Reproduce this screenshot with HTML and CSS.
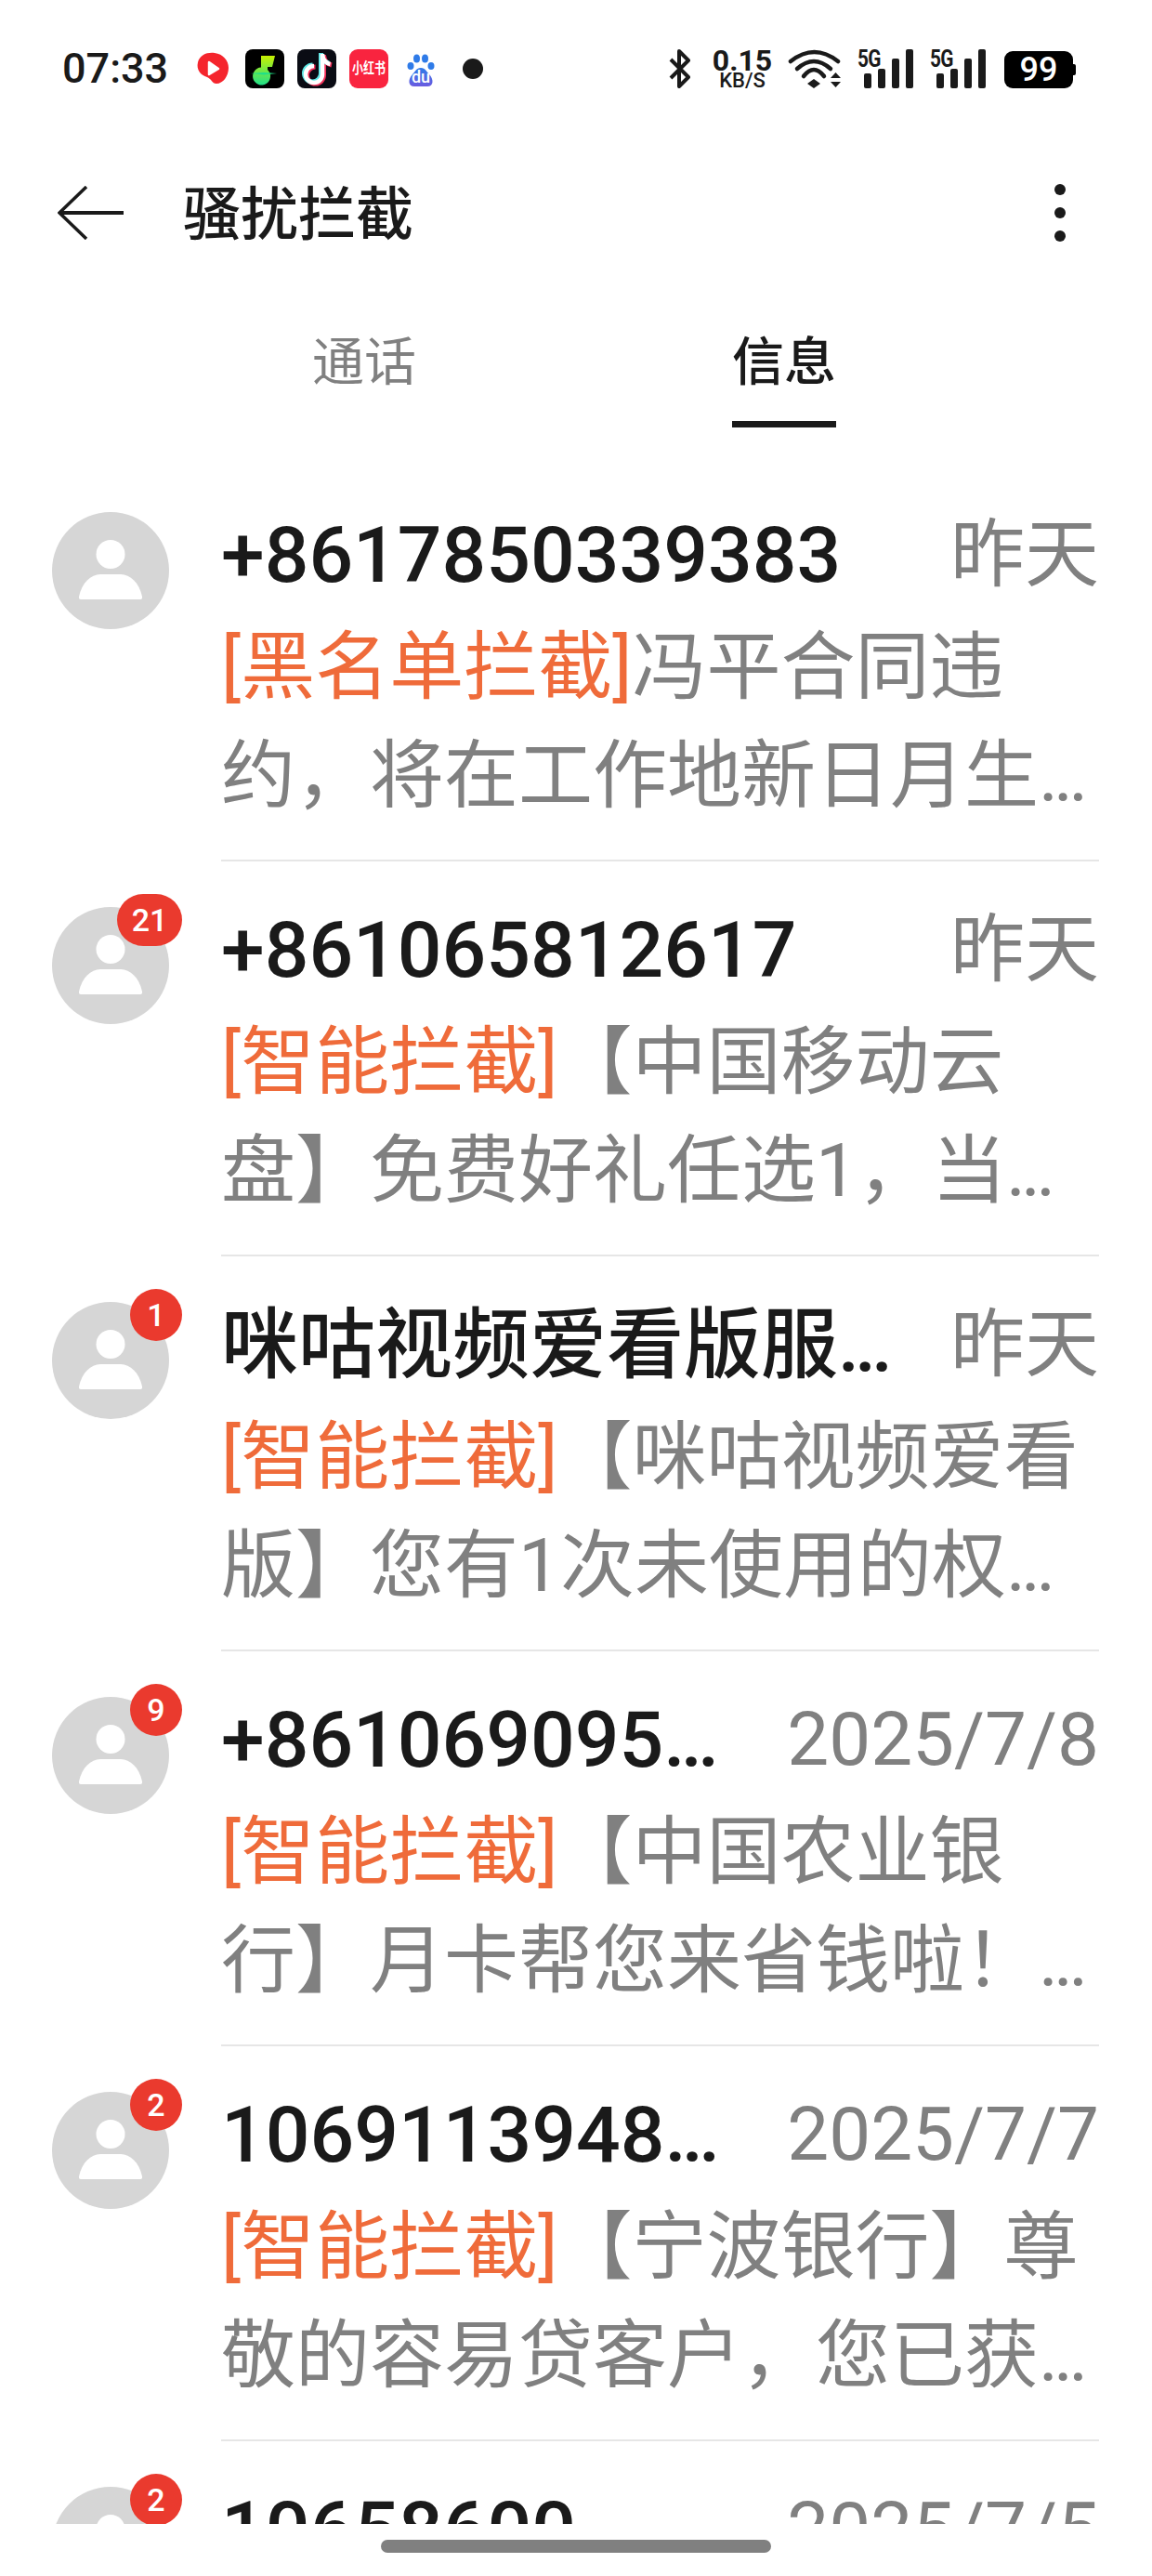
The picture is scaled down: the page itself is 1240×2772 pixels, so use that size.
FILE: index.html
```html
<!DOCTYPE html>
<html lang="zh-CN">
<head>
    <meta charset="UTF-8">
    <meta name="viewport" content="width=device-width, initial-scale=1.0">
    <title>骚扰拦截</title>
    <link rel="stylesheet" href="styles.css">
</head>
<body>
    <svg class="defs" width="0" height="0">
        <symbol id="person" viewBox="0 0 126 126">
            <circle cx="63" cy="63" r="63" fill="#d6d6d6"/>
            <circle cx="63" cy="45.5" r="15.5" fill="#fff"/>
            <path d="M29 91C32 76 42 67 52 67H74C84 67 94 76 97 91Q97.5 94 95 94H31Q28.5 94 29 91Z" fill="#fff"/>
        </symbol>
        <symbol id="signal" viewBox="0 0 60 42">
            <rect x="7" y="26" width="8" height="16" rx="2"/>
            <rect x="22" y="21" width="8" height="21" rx="2"/>
            <rect x="37" y="10" width="8" height="32" rx="2"/>
            <rect x="52" y="0" width="8" height="42" rx="2"/>
        </symbol>
    </svg>

    <div class="status-bar">
        <div class="status-left">
            <span class="time">07:33</span>
            <svg class="app-icon" viewBox="0 0 42 42">
                <path d="M5 14C7 6 15 3 23 4C32 5 38 12 38 20C38 29 32 37 25 37C20 37 20 32 15 30C8 28 3 22 5 14Z" fill="#f5252d"/>
                <path d="M17 14L27 21L17 27Z" fill="#fff" stroke="#fff" stroke-width="2.5" stroke-linejoin="round"/>
            </svg>
            <svg class="app-icon" viewBox="0 0 42 42">
                <defs>
                    <linearGradient id="musicGrad" x1="0" y1="0" x2="0" y2="1">
                        <stop offset="0" stop-color="#c8f000"/>
                        <stop offset="1" stop-color="#1fe08a"/>
                    </linearGradient>
                </defs>
                <rect width="42" height="42" rx="8" fill="#000"/>
                <path d="M17 7H32L29 19H24V22A9.5 9.5 0 1 1 17 19.5Z" fill="url(#musicGrad)"/>
                <path d="M6 26L20 25L34 26L20 27.5Z" fill="#1fe08a"/>
            </svg>
            <svg class="app-icon" viewBox="0 0 42 42">
                <rect width="42" height="42" rx="8" fill="#0a0c14"/>
                <path d="M28.5 6V28A9 9 0 1 1 19.5 19" fill="none" stroke="#f0305a" stroke-width="5"/>
                <path d="M28.5 7C29.5 13 32 16 37 17" fill="none" stroke="#f0305a" stroke-width="5"/>
                <path d="M25.5 4V26A9 9 0 1 1 16.5 17" fill="none" stroke="#5ee8e6" stroke-width="5"/>
                <path d="M25.5 5C26.5 11 29 14 34 15" fill="none" stroke="#5ee8e6" stroke-width="5"/>
                <path d="M27 5V27A9 9 0 1 1 18 18" fill="none" stroke="#fff" stroke-width="4.5"/>
                <path d="M27 6C28 12 30.5 15 35.5 16" fill="none" stroke="#fff" stroke-width="4.5"/>
            </svg>
            <span class="app-red"><span class="app-red-text">小红书</span></span>
            <svg class="app-icon" viewBox="0 0 42 42">
                <defs>
                    <linearGradient id="duGrad" x1="0" y1="0" x2="0" y2="1">
                        <stop offset="0" stop-color="#2f7be8"/>
                        <stop offset="1" stop-color="#6a5be0"/>
                    </linearGradient>
                </defs>
                <ellipse cx="16.5" cy="10" rx="3.5" ry="4.5" fill="#2f7be8"/>
                <ellipse cx="25.5" cy="10" rx="3.5" ry="4.5" fill="#2f7be8"/>
                <ellipse cx="10" cy="18" rx="3.5" ry="4" fill="#2f7be8"/>
                <ellipse cx="32" cy="18" rx="3.5" ry="4" fill="#2f7be8"/>
                <path d="M21 20C26 20 27 24 30 27C35 32 35 40 28 40H14C7 40 7 32 12 27C15 24 16 20 21 20Z" fill="url(#duGrad)"/>
                <text class="du" x="21" y="36" text-anchor="middle">du</text>
            </svg>
            <svg class="app-icon" viewBox="0 0 42 42"><circle cx="21" cy="21" r="11" fill="#1a1a1a"/></svg>
        </div>
        <div class="status-right">
            <svg class="bt" viewBox="0 0 25 42">
                <path d="M2 11L21 30L11 40V2L21 12L2 31" fill="none" stroke="#1a1a1a" stroke-width="4" stroke-linejoin="round"/>
            </svg>
            <div class="speed">
                <span class="speed-num">0.15</span>
                <span class="speed-unit">KB/S</span>
            </div>
            <svg class="wifi" viewBox="0 0 59 42">
                <path d="M3 13Q28.5 -7 54 13" fill="none" stroke="#1a1a1a" stroke-width="4.5" stroke-linecap="round"/>
                <path d="M10 21Q28 5 46 21" fill="none" stroke="#1a1a1a" stroke-width="4.5" stroke-linecap="round"/>
                <path d="M17 29Q28 15 39 29" fill="none" stroke="#1a1a1a" stroke-width="4.5" stroke-linecap="round"/>
                <path d="M21 37L28 32L35 37L28 42Z" fill="#1a1a1a"/>
                <path d="M46 31L51.5 25L57 31Z" fill="#1a1a1a"/>
                <path d="M46 35H57L51.5 41Z" fill="#1a1a1a"/>
            </svg>
            <div class="net">
                <span class="net-label">5G</span>
                <svg class="net-bars" viewBox="0 0 60 42"><use href="#signal"/></svg>
            </div>
            <div class="net">
                <span class="net-label">5G</span>
                <svg class="net-bars" viewBox="0 0 60 42"><use href="#signal"/></svg>
            </div>
            <div class="battery">99</div>
        </div>
    </div>

    <div class="header">
        <svg class="back" viewBox="0 0 72 58">
            <path d="M31 1L2 29L31 57" fill="none" stroke="#1a1a1a" stroke-width="3.5"/>
            <path d="M2 29H71" fill="none" stroke="#1a1a1a" stroke-width="4"/>
        </svg>
        <h1 class="title">骚扰拦截</h1>
        <div class="more"><i></i><i></i><i></i></div>
    </div>

    <div class="tabs">
        <div class="tab">通话</div>
        <div class="tab active">信息</div>
    </div>

    <div class="list">
        <div class="row">
            <div class="avatar"><svg class="person"><use href="#person"/></svg></div>
            <div class="row-body">
                <div class="row-top"><span class="name">+8617850339383</span><span class="date">昨天</span></div>
                <div class="msg"><span class="tag">[黑名单拦截]</span>冯平合同违</div>
                <div class="msg">约，将在工作地新日月生<span class="dots">...</span></div>
            </div>
        </div>
        <div class="row">
            <div class="avatar"><svg class="person"><use href="#person"/></svg><span class="badge wide">21</span></div>
            <div class="row-body">
                <div class="row-top"><span class="name">+861065812617</span><span class="date">昨天</span></div>
                <div class="msg"><span class="tag">[智能拦截]</span>【中国移动云</div>
                <div class="msg">盘】免费好礼任选1，当<span class="dots">...</span></div>
            </div>
        </div>
        <div class="row">
            <div class="avatar"><svg class="person"><use href="#person"/></svg><span class="badge">1</span></div>
            <div class="row-body">
                <div class="row-top"><span class="name cjk">咪咕视频爱看版服<span class="dots">...</span></span><span class="date">昨天</span></div>
                <div class="msg"><span class="tag">[智能拦截]</span>【咪咕视频爱看</div>
                <div class="msg">版】您有1次未使用的权<span class="dots">...</span></div>
            </div>
        </div>
        <div class="row">
            <div class="avatar"><svg class="person"><use href="#person"/></svg><span class="badge">9</span></div>
            <div class="row-body">
                <div class="row-top"><span class="name">+861069095<span class="dots">...</span></span><span class="date">2025/7/8</span></div>
                <div class="msg"><span class="tag">[智能拦截]</span>【中国农业银</div>
                <div class="msg">行】月卡帮您来省钱啦！<span class="dots">...</span></div>
            </div>
        </div>
        <div class="row">
            <div class="avatar"><svg class="person"><use href="#person"/></svg><span class="badge">2</span></div>
            <div class="row-body">
                <div class="row-top"><span class="name">1069113948<span class="dots">...</span></span><span class="date">2025/7/7</span></div>
                <div class="msg"><span class="tag">[智能拦截]</span>【宁波银行】尊</div>
                <div class="msg">敬的容易贷客户，您已获<span class="dots">...</span></div>
            </div>
        </div>
        <div class="row">
            <div class="avatar"><svg class="person"><use href="#person"/></svg><span class="badge">2</span></div>
            <div class="row-body">
                <div class="row-top"><span class="name">10658600</span><span class="date">2025/7/5</span></div>
            </div>
        </div>
    </div>

    <div class="home-bar"><span></span></div>
</body>
</html>
```

FILE: styles.css
```css
body {
    margin: 0;
    width: 1240px;
    height: 2772px;
    overflow: hidden;
    background: #fff;
    color: #1a1a1a;
    font-family: Roboto, "Noto Sans CJK SC", sans-serif;
}

.defs {
    position: absolute;
}

/* status bar */
.status-bar {
    height: 148px;
    box-sizing: border-box;
    padding: 53px 82px 0 67px;
    display: flex;
    justify-content: space-between;
    align-items: flex-start;
}
.status-left {
    display: flex;
    align-items: center;
    gap: 14px;
    height: 42px;
}
.time {
    width: 127px;
    font-size: 45px;
    font-weight: 500;
    line-height: 42px;
}
.app-icon {
    width: 42px;
    height: 42px;
}
.app-red {
    width: 42px;
    height: 42px;
    border-radius: 9px;
    background: #f9243f;
    color: #fff;
    display: flex;
    align-items: center;
    justify-content: center;
}
.app-red-text {
    font-size: 12px;
    font-weight: 700;
    line-height: 14px;
    white-space: nowrap;
    transform: scaleY(1.3);
}
.du {
    font-family: Roboto, sans-serif;
    font-size: 18px;
    font-weight: 500;
    fill: #fff;
}
.status-right {
    display: flex;
    align-items: flex-start;
}
.bt {
    width: 25px;
    height: 42px;
}
.speed {
    width: 60px;
    margin-left: 24px;
    display: flex;
    flex-direction: column;
    align-items: center;
    font-weight: 700;
}
.speed-num {
    font-size: 32px;
    line-height: 25px;
}
.speed-unit {
    font-size: 22px;
    font-weight: 500;
    line-height: 18px;
}
.wifi {
    width: 59px;
    height: 42px;
    margin-left: 19px;
}
.net {
    position: relative;
    width: 60px;
    height: 42px;
    margin-left: 16px;
}
.net + .net {
    margin-left: 18px;
}
.net-bars {
    display: block;
    width: 60px;
    height: 42px;
    fill: #1a1a1a;
}
.net-label {
    position: absolute;
    left: 0;
    top: -4px;
    font-size: 26px;
    font-weight: 700;
    line-height: 28px;
    letter-spacing: -1px;
    transform: scaleX(0.8);
    transform-origin: left center;
}
.battery {
    width: 74px;
    height: 40px;
    margin: 2px 3px 0 20px;
    position: relative;
    border-radius: 9px;
    background: #000;
    color: #fff;
    font-size: 36px;
    font-weight: 500;
    line-height: 40px;
    text-align: center;
}
.battery::after {
    content: "";
    position: absolute;
    right: -3px;
    top: 14px;
    width: 3px;
    height: 12px;
    border-radius: 0 2px 2px 0;
    background: #000;
}

/* header */
.header {
    height: 162px;
    box-sizing: border-box;
    padding: 0 93px 0 62px;
    display: flex;
    align-items: center;
}
.back {
    width: 72px;
    height: 58px;
}
.title {
    margin: 6px 0 0 63px;
    flex: 1;
    font-size: 62px;
    font-weight: 500;
    line-height: 70px;
}
.more {
    display: flex;
    flex-direction: column;
    gap: 13px;
}
.more i {
    width: 12px;
    height: 12px;
    border-radius: 50%;
    background: #1a1a1a;
}

/* tabs */
.tabs {
    height: 150px;
    padding: 0 170px 0 166px;
    display: flex;
}
.tab {
    flex: 1;
    display: flex;
    justify-content: center;
    padding-top: 50px;
    box-sizing: border-box;
    font-size: 56px;
    line-height: 60px;
    color: #808080;
}
.tab.active {
    color: #1a1a1a;
    font-weight: 500;
    position: relative;
}
.tab.active::after {
    content: "";
    position: absolute;
    left: 50%;
    bottom: 0;
    width: 112px;
    height: 7px;
    margin-left: -56px;
    background: #1a1a1a;
}

/* message list */
.list {
    margin-top: 42px;
    height: 2214px;
    overflow: hidden;
}
.row {
    height: 425px;
    box-sizing: border-box;
    padding: 0 57px 0 56px;
    display: flex;
}
.avatar {
    position: relative;
    width: 126px;
    height: 126px;
    margin-top: 49px;
    flex: none;
}
.person {
    display: block;
    width: 126px;
    height: 126px;
}
.badge {
    position: absolute;
    right: -14px;
    top: -14px;
    min-width: 56px;
    height: 56px;
    border-radius: 28px;
    background: #ea3a2e;
    color: #fff;
    font-size: 34px;
    font-weight: 500;
    line-height: 56px;
    text-align: center;
}
.badge.wide {
    min-width: 70px;
}
.row-body {
    flex: 1;
    margin-left: 56px;
    padding-top: 37px;
    box-sizing: border-box;
    border-bottom: 2px solid #e6e6e6;
}
.row-top {
    display: flex;
    justify-content: space-between;
    height: 121px;
    line-height: 117px;
}
.name {
    font-size: 84px;
    font-weight: 500;
    white-space: nowrap;
}
.name.cjk {
    font-size: 83px;
}
.date {
    font-size: 80px;
    color: #808080;
    white-space: nowrap;
}
.msg {
    font-size: 80px;
    line-height: 117px;
    color: #808080;
    white-space: nowrap;
}
.dots {
    letter-spacing: -5px;
}
.tag {
    color: #ef6b3a;
}

/* gesture bar */
.home-bar {
    padding-top: 17px;
    display: flex;
    justify-content: center;
}
.home-bar span {
    width: 420px;
    height: 14px;
    border-radius: 7px;
    background: #808080;
}
```
